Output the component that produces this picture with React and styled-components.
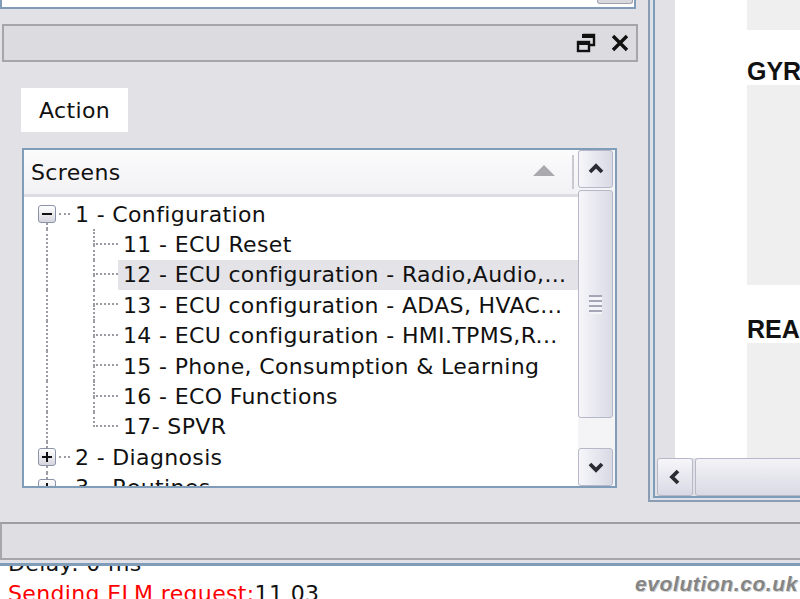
import React from 'react';
import styled, { createGlobalStyle } from 'styled-components';

const rows = [
  { level: 0, label: '1 - Configuration', open: true, first: true },
  { level: 1, label: '11 - ECU Reset' },
  { level: 1, label: '12 - ECU configuration - Radio,Audio,...', selected: true },
  { level: 1, label: '13 - ECU configuration - ADAS, HVAC...' },
  { level: 1, label: '14 - ECU configuration - HMI.TPMS,R...' },
  { level: 1, label: '15 - Phone, Consumption & Learning' },
  { level: 1, label: '16 - ECO Functions' },
  { level: 1, label: '17- SPVR', last: true },
  { level: 0, label: '2 - Diagnosis' },
  { level: 0, label: '3 - Routines' },
];

function RestoreIcon() {
  return (
    <svg width="20" height="20" viewBox="0 0 20 20">
      <path d="M7 2h11v10h-5" fill="none" stroke="#111" strokeWidth="2.4" />
      <rect x="6" y="1" width="13" height="4" fill="#111" />
      <rect x="2" y="9" width="11" height="9" fill="none" stroke="#111" strokeWidth="2.4" />
      <rect x="1" y="8" width="13" height="4" fill="#111" />
    </svg>
  );
}

function CloseIcon() {
  return (
    <svg width="20" height="18" viewBox="0 0 20 18">
      <path d="M3 2L17 16M17 2L3 16" stroke="#111" strokeWidth="3.4" />
    </svg>
  );
}

function Chevron({ dir }) {
  const d = {
    up: 'M2 11L8 5L14 11',
    down: 'M2 5L8 11L14 5',
    left: 'M11 2L5 8L11 14',
  }[dir];
  return (
    <svg width="16" height="16" viewBox="0 0 16 16">
      <path d={d} fill="none" stroke="#2b2b33" strokeWidth="3.8" />
    </svg>
  );
}

function TreeRow({ row }) {
  if (row.level === 0) {
    return (
      <Row>
        <ExpanderCell>
          {!row.first && <VLine $area="1 / 2" />}
          <Box>
            <Minus />
            {!row.open && <PlusBar />}
          </Box>
          <HLine />
          <VLine $area="3 / 2" />
        </ExpanderCell>
        <Label>{row.label}</Label>
      </Row>
    );
  }
  return (
    <Row>
      <ContinueCell><span /></ContinueCell>
      <BranchCell>
        <BranchTop />
        {!row.last && <BranchBottom />}
      </BranchCell>
      <Label $selected={row.selected}>{row.label}</Label>
    </Row>
  );
}

export default function App() {
  return (
    <>
      <GlobalStyle />
      <Screen>
        <Upper>
          <LeftPane>
            <TopStrip>
              <StripButton />
            </TopStrip>
            <TitleBar>
              <RestoreIcon />
              <CloseIcon />
            </TitleBar>
            <ActionTab>Action</ActionTab>
            <ListBox>
              <ListMain>
                <Header>
                  <HeaderLabel>Screens</HeaderLabel>
                  <svg width="22" height="11" viewBox="0 0 22 11">
                    <path d="M0 11L11 0L22 11Z" fill="#a9a9ae" />
                  </svg>
                  <HeaderDivider />
                </Header>
                <Tree>
                  {rows.map((r) => (
                    <TreeRow key={r.label} row={r} />
                  ))}
                </Tree>
              </ListMain>
              <VScroll>
                <ScrollButton><Chevron dir="up" /></ScrollButton>
                <Thumb><Grip /></Thumb>
                <TrackGap />
                <ScrollButton><Chevron dir="down" /></ScrollButton>
              </VScroll>
            </ListBox>
          </LeftPane>
          <RightPane>
            <Frame>
              <ContentRow>
                <ContentPanel>
                  <GreyBlock style={{ height: 30 }} />
                  <SectionTitle $top={27}>GYRO</SectionTitle>
                  <GreyBlock style={{ height: 200 }} />
                  <SectionTitle $top={30}>READ</SectionTitle>
                  <GreyBlock $fill />
                </ContentPanel>
              </ContentRow>
              <HScroll>
                <HButton><Chevron dir="left" /></HButton>
                <HTrack />
              </HScroll>
            </Frame>
          </RightPane>
        </Upper>
        <StatusBar />
        <Log>
          <LogLine $first>Delay: 0 ms</LogLine>
          <LogLine>
            <Red>Sending ELM request:</Red>11 03
          </LogLine>
        </Log>
        <Watermark>evolution.co.uk</Watermark>
      </Screen>
    </>
  );
}

const GlobalStyle = createGlobalStyle`
  html, body { margin: 0; padding: 0; }
  body {
    background: #e2e1e6;
    font-family: "DejaVu Sans", Verdana, sans-serif;
    overflow: hidden;
  }
  * { box-sizing: border-box; }
`;

const Screen = styled.div`
  position: relative;
  width: 800px;
  height: 599px;
  display: flex;
  flex-direction: column;
  overflow: hidden;
  background: #e2e1e6;
  color: #111;
  letter-spacing: 0.35px;
`;

const Upper = styled.div`
  display: flex;
  align-items: flex-start;
  height: 520px;
  flex-shrink: 0;
`;

const LeftPane = styled.div`
  width: 648px;
  display: flex;
  flex-direction: column;
`;

const TopStrip = styled.div`
  width: 636px;
  height: 9px;
  background: #fff;
  border: 2px solid #7f9db9;
  border-top: none;
  display: flex;
  justify-content: flex-end;
  padding-right: 1px;
`;

const StripButton = styled.div`
  width: 36px;
  height: 4px;
  background: #d9d8de;
  border: 1px solid #a3a2ab;
  border-top: none;
  border-radius: 0 0 3px 3px;
`;

const TitleBar = styled.div`
  margin: 15px 0 0 2px;
  width: 636px;
  height: 38px;
  border: 2px solid #a6a5ab;
  background: #dcdbe0;
  display: flex;
  align-items: center;
  justify-content: flex-end;
  gap: 14px;
  padding-right: 6px;
`;

const ActionTab = styled.div`
  margin: 26px 0 0 21px;
  width: 107px;
  height: 44px;
  background: #fff;
  display: flex;
  align-items: center;
  padding-left: 18px;
  font-size: 22px;
`;

const ListBox = styled.div`
  margin: 16px 0 0 22px;
  width: 595px;
  height: 340px;
  border: 2px solid #7f9db9;
  background: #fff;
  display: flex;
`;

const ListMain = styled.div`
  flex: 1;
  min-width: 0;
  display: flex;
  flex-direction: column;
`;

const Header = styled.div`
  height: 47px;
  flex-shrink: 0;
  background: linear-gradient(#fbfbfc, #f2f2f5);
  border-bottom: 3px solid #dcdce2;
  display: flex;
  align-items: center;
  padding-left: 7px;
  font-size: 22px;
  svg { margin-right: 17px; margin-top: -4px; }
`;

const HeaderLabel = styled.div`
  flex: 1;
`;

const HeaderDivider = styled.div`
  width: 2px;
  height: 34px;
  background: #c9c9d0;
  margin-right: 4px;
`;

const Tree = styled.div`
  flex: 1;
  overflow: hidden;
  padding-top: 2px;
`;

const Row = styled.div`
  height: 30.4px;
  display: flex;
`;

const dots = '2px dotted #9c9ca4';

const ExpanderCell = styled.div`
  width: 46px;
  flex-shrink: 0;
  display: grid;
  grid-template-columns: 14px 18px 14px;
  grid-template-rows: 1fr 18px 1fr;
`;

const VLine = styled.div`
  grid-area: ${(p) => p.$area};
  margin-left: 8px;
  border-left: ${dots};
`;

const HLine = styled.div`
  grid-area: 2 / 3;
  align-self: center;
  margin-left: 3px;
  border-top: ${dots};
`;

const Box = styled.div`
  grid-area: 2 / 2;
  position: relative;
  border: 1px solid #8a93a8;
  border-radius: 3px;
  background: linear-gradient(#ffffff, #d6d5de);
  display: flex;
  align-items: center;
  justify-content: center;
`;

const Minus = styled.span`
  width: 10px;
  height: 2px;
  background: #111;
`;

const PlusBar = styled.span`
  position: absolute;
  left: 7px;
  top: 3px;
  width: 2px;
  height: 10px;
  background: #111;
`;

const ContinueCell = styled.div`
  width: 46px;
  flex-shrink: 0;
  display: flex;
  span {
    margin-left: 22px;
    border-left: ${dots};
  }
`;

const BranchCell = styled.div`
  width: 48px;
  flex-shrink: 0;
  display: grid;
  grid-template-rows: 1fr 1fr;
`;

const BranchTop = styled.div`
  margin-left: 23px;
  border-left: ${dots};
  border-bottom: ${dots};
`;

const BranchBottom = styled.div`
  margin-left: 23px;
  border-left: ${dots};
`;

const Label = styled.div`
  flex: 1;
  min-width: 0;
  display: flex;
  align-items: center;
  padding-left: 5px;
  font-size: 22px;
  white-space: nowrap;
  overflow: hidden;
  background: ${(p) => (p.$selected ? '#e3e3e8' : 'transparent')};
`;

const VScroll = styled.div`
  width: 37px;
  flex-shrink: 0;
  display: flex;
  flex-direction: column;
  padding-right: 2px;
  background: #f4f4f7;
`;

const ScrollButton = styled.div`
  height: 38px;
  flex-shrink: 0;
  border: 1px solid #b7b8c7;
  border-radius: 3px;
  background: linear-gradient(to right, #f6f6fa, #d8d9e4);
  display: flex;
  align-items: center;
  justify-content: center;
`;

const Thumb = styled.div`
  margin-top: 2px;
  height: 228px;
  border: 1px solid #b7b8c7;
  border-radius: 3px;
  background: linear-gradient(to right, #f6f6fa, #dadbe5);
  display: flex;
  align-items: center;
  justify-content: center;
`;

const Grip = styled.span`
  width: 13px;
  height: 19px;
  background: repeating-linear-gradient(#a4a6b7 0 2px, #f4f4f8 2px 5px);
`;

const TrackGap = styled.div`
  flex: 1;
`;

const RightPane = styled.div`
  width: 152px;
  height: 502px;
  border-left: 2px solid #8b9db4;
  border-bottom: 2px solid #8b9db4;
  padding: 0 0 2px 3px;
  background: #dde2ea;
  display: flex;
`;

const Frame = styled.div`
  flex: 1;
  border-left: 2px solid #7f9db9;
  border-bottom: 2px solid #7f9db9;
  background: #e2e1e6;
  display: flex;
  flex-direction: column;
`;

const ContentRow = styled.div`
  height: 458px;
  padding-left: 20px;
  display: flex;
`;

const ContentPanel = styled.div`
  flex: 1;
  background: #fff;
  padding-left: 72px;
  display: flex;
  flex-direction: column;
`;

const GreyBlock = styled.div`
  background: #efefef;
  flex: ${(p) => (p.$fill ? 1 : 'none')};
`;

const SectionTitle = styled.div`
  margin-top: ${(p) => p.$top}px;
  height: 28px;
  line-height: 28px;
  font-family: "Liberation Sans", Arial, sans-serif;
  font-weight: bold;
  font-size: 25px;
  letter-spacing: 0;
  white-space: nowrap;
  overflow: hidden;
`;

const HScroll = styled.div`
  height: 38px;
  margin-left: 2px;
  display: flex;
  gap: 2px;
`;

const HButton = styled.div`
  width: 36px;
  border: 1px solid #b7b8c7;
  border-radius: 3px;
  background: linear-gradient(#f6f6fa, #d8d9e4);
  display: flex;
  align-items: center;
  justify-content: center;
`;

const HTrack = styled.div`
  flex: 1;
  border: 1px solid #b7b8c7;
  border-radius: 3px;
  background: linear-gradient(#f3f3f7, #d9dae4);
`;

const StatusBar = styled.div`
  margin-top: 2px;
  height: 38px;
  flex-shrink: 0;
  border-top: 2px solid #9e9da3;
  border-bottom: 2px solid #a7a6ac;
  border-left: 2px solid #a7a6ac;
  background: #dfdee3;
`;

const Log = styled.div`
  margin-top: 3px;
  flex: 1;
  border-top: 3px solid #7f9db9;
  background: #fff;
  overflow: hidden;
  padding-left: 8px;
`;

const LogLine = styled.div`
  margin-top: ${(p) => (p.$first ? '-17px' : '0')};
  height: 30px;
  line-height: 30px;
  font-size: 22px;
  white-space: nowrap;
`;

const Red = styled.span`
  color: #f00;
`;

const Watermark = styled.div`
  position: absolute;
  right: 2px;
  bottom: 3px;
  font-family: "Liberation Sans", Arial, sans-serif;
  font-weight: bold;
  font-style: italic;
  font-size: 21px;
  letter-spacing: 0.6px;
  color: #858585;
  text-shadow: 1px 1px 0 #d0d0d0;
`;
